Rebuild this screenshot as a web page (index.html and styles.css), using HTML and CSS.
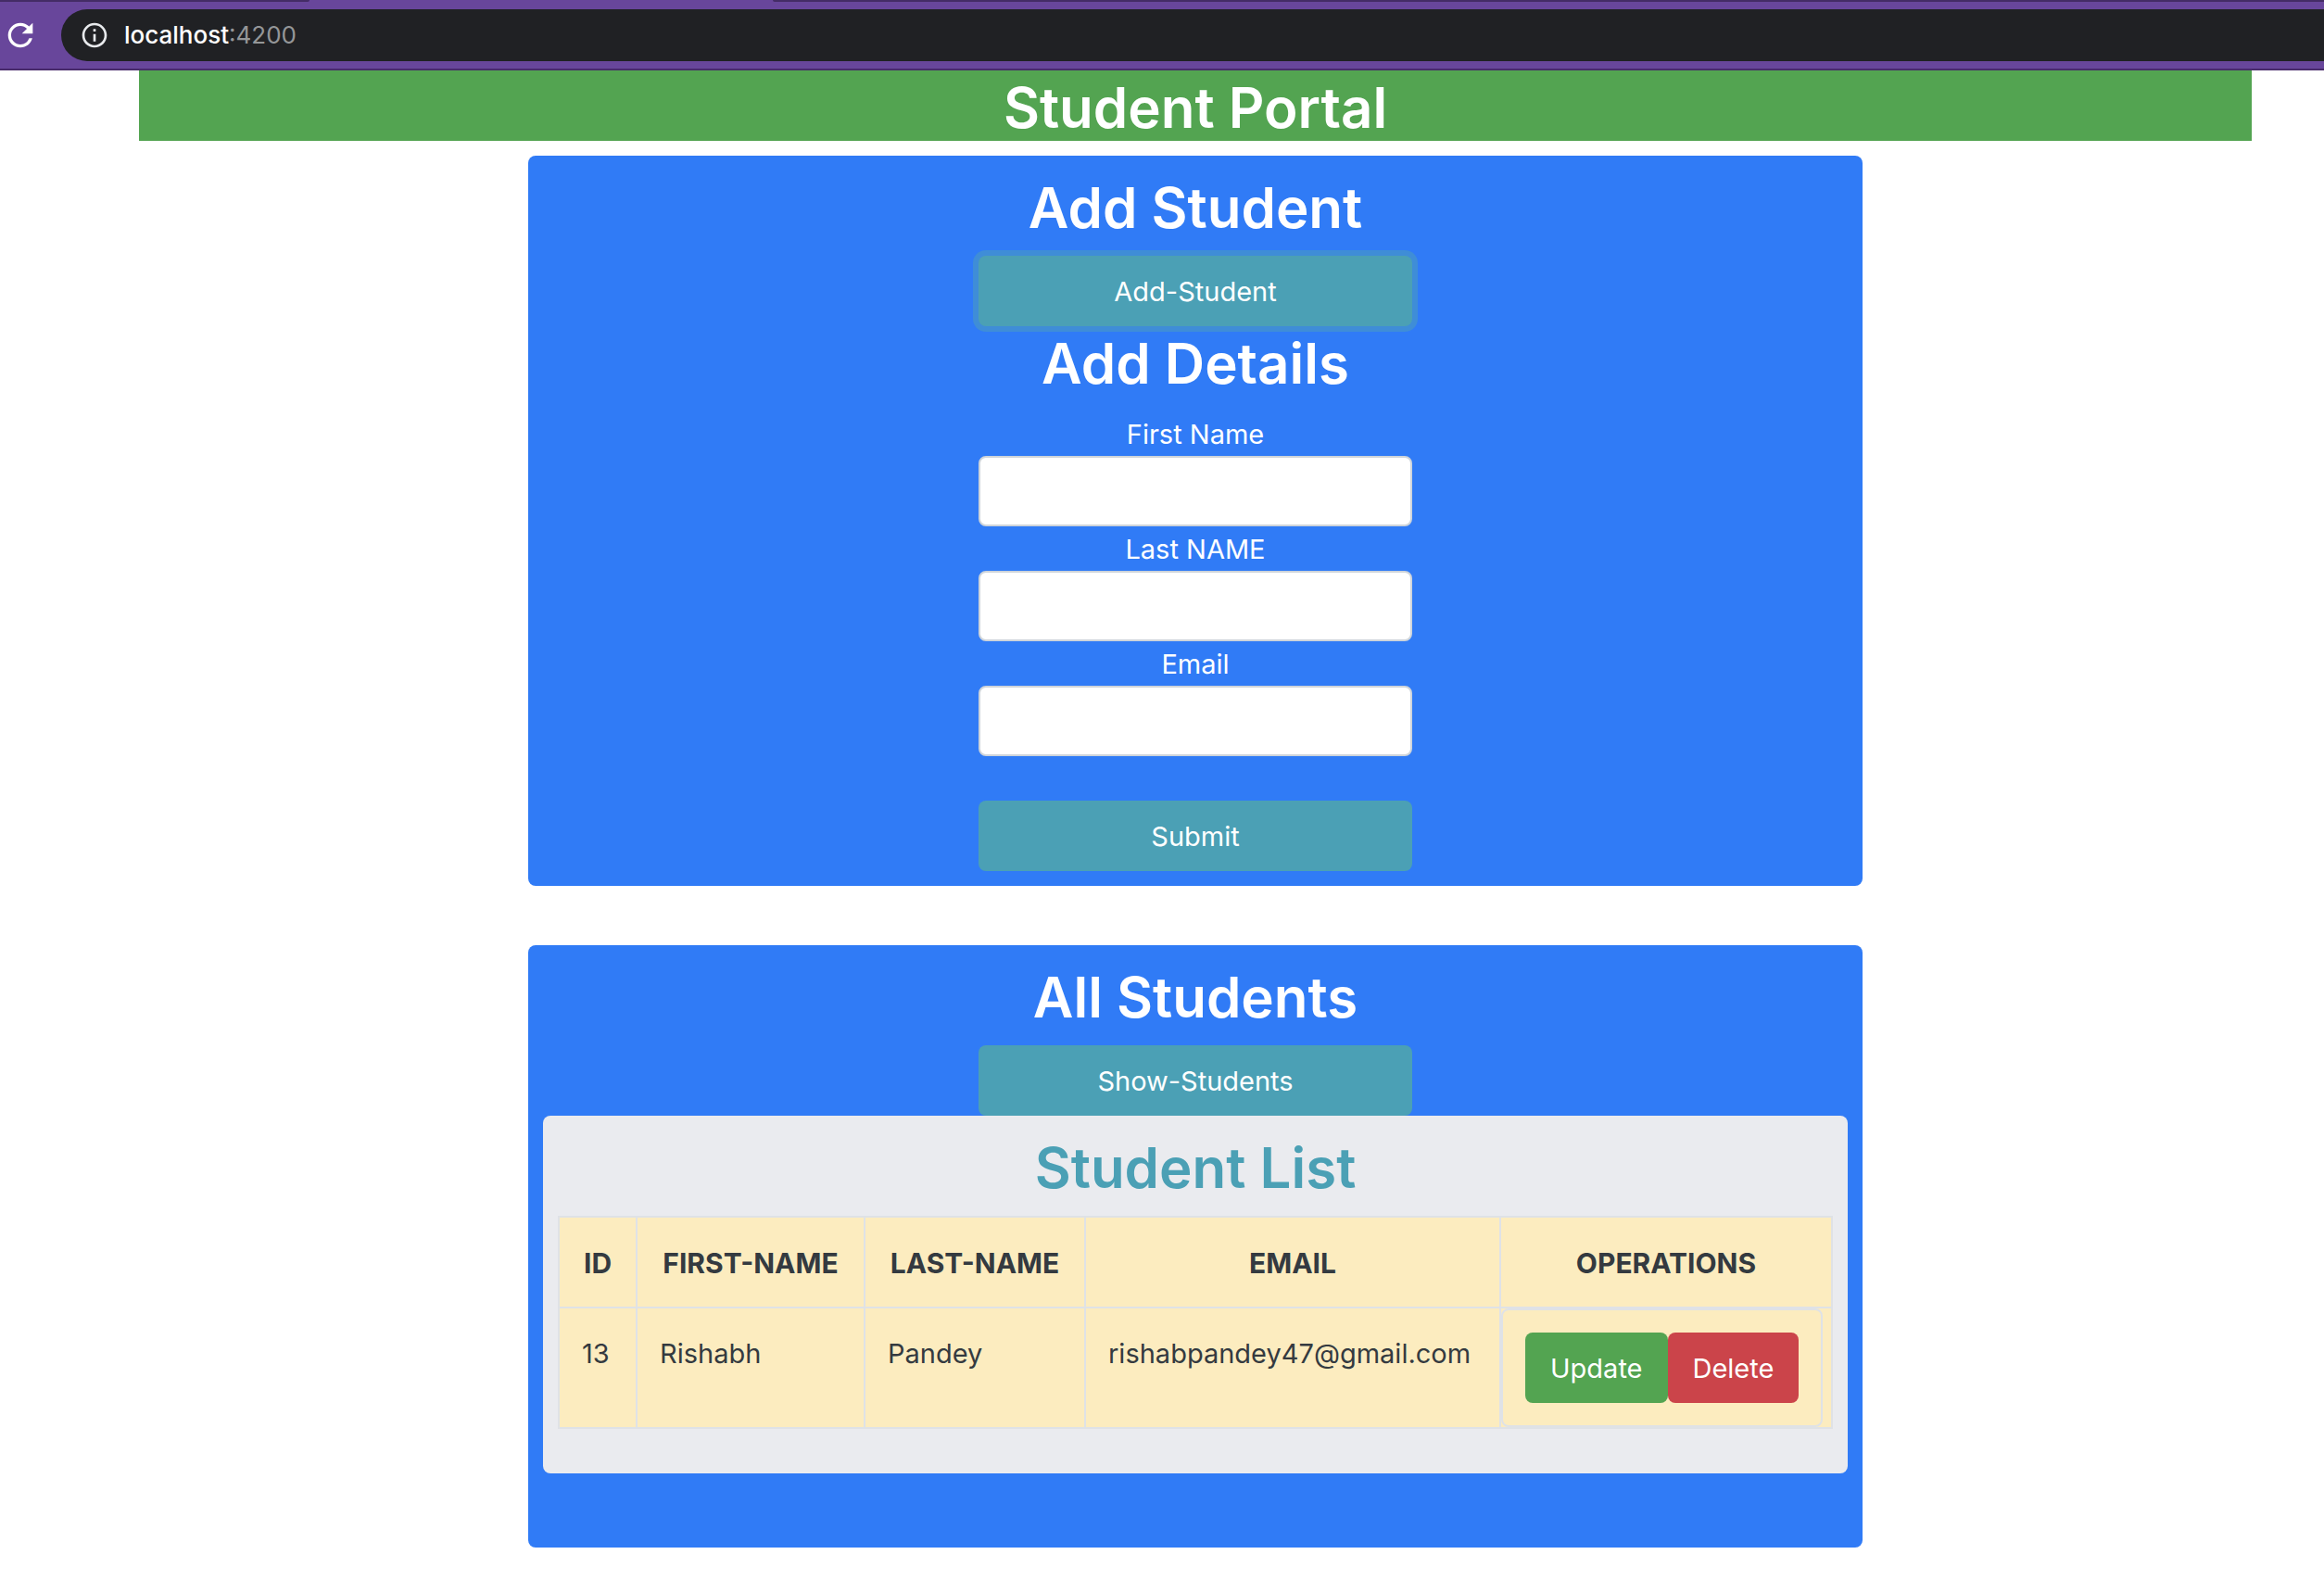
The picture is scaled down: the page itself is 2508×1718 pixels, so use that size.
FILE: index.html
```html
<!DOCTYPE html>
<html lang="en">
<head>
<meta charset="utf-8">
<title>Student Portal</title>
<link rel="stylesheet" href="styles.css">
</head>
<body>
<div class="browser">
  <div class="tabstrip"><span class="tab-left"></span><span class="tab-right"></span></div>
  <div class="toolbar">
    <button class="reload" type="button" aria-label="Reload">
      <svg viewBox="0 0 24 24" width="40" height="40" fill="#fff"><path d="M17.65 6.35A7.96 7.96 0 0 0 12 4c-4.42 0-7.99 3.58-7.99 8s3.57 8 7.99 8c3.73 0 6.84-2.55 7.73-6h-2.08A5.99 5.99 0 0 1 12 18c-3.31 0-6-2.69-6-6s2.69-6 6-6c1.66 0 3.14.69 4.22 1.78L13 11h7V4z"/></svg>
    </button>
    <div class="address">
      <svg viewBox="0 0 24 24" width="32" height="32" fill="#e8eaed"><path d="M11 7h2v2h-2zm0 4h2v6h-2zm1-9C6.48 2 2 6.48 2 12s4.48 10 10 10 10-4.48 10-10S17.52 2 12 2zm0 18c-4.41 0-8-3.59-8-8s3.59-8 8-8 8 3.59 8 8-3.59 8-8 8z"/></svg>
      <span class="url">localhost<span class="port">:4200</span></span>
    </div>
  </div>
</div>

<main class="container">
  <h1 class="title banner">Student Portal</h1>

  <section class="card">
    <h2 class="title">Add Student</h2>
    <button class="btn btn-info btn-wide focused" type="button">Add-Student</button>
    <form class="form">
      <h2 class="title">Add Details</h2>
      <label for="first">First Name</label>
      <input id="first" type="text">
      <label for="last">Last NAME</label>
      <input id="last" type="text">
      <label for="email">Email</label>
      <input id="email" type="text">
      <button class="btn btn-info btn-wide submit" type="button">Submit</button>
    </form>
  </section>

  <section class="card students">
    <h2 class="title">All Students</h2>
    <button class="btn btn-info btn-wide" type="button">Show-Students</button>
    <div class="list">
      <h2 class="title list-title">Student List</h2>
      <table class="table">
        <colgroup>
          <col class="col-id"><col class="col-first"><col class="col-last"><col class="col-email"><col>
        </colgroup>
        <thead>
          <tr><th>ID</th><th>FIRST-NAME</th><th>LAST-NAME</th><th>EMAIL</th><th>OPERATIONS</th></tr>
        </thead>
        <tbody>
          <tr>
            <td>13</td><td>Rishabh</td><td>Pandey</td><td>rishabpandey47@gmail.com</td>
            <td class="operations">
              <div class="actions">
                <button class="btn btn-success" type="button">Update</button>
                <button class="btn btn-danger" type="button">Delete</button>
              </div>
            </td>
          </tr>
        </tbody>
      </table>
    </div>
  </section>
</main>
</body>
</html>
```
FILE: styles.css
```css
* { box-sizing: border-box; }

body {
  margin: 0;
  background: #fff;
  color: #343a40;
  font: 400 29px/46px Inter, "Liberation Sans", sans-serif;
}

button, input { font: inherit; }

/* Browser chrome */
.browser {
  background: #68469b;
  border-bottom: 2px solid #482b6b;
  overflow: hidden;
}
.tabstrip {
  display: flex;
  justify-content: space-between;
  height: 2px;
}
.tab-left, .tab-right { background: #442c66; }
.tab-left { width: 334px; border-bottom-right-radius: 6px; }
.tab-right { flex: 1; margin-left: 500px; border-bottom-left-radius: 6px; }
.toolbar {
  display: flex;
  align-items: center;
  gap: 24px;
  padding: 8px 0 8px 2px;
}
.reload {
  display: flex;
  padding: 0;
  border: 0;
  background: none;
}
.address {
  flex: 1;
  display: flex;
  align-items: center;
  gap: 16px;
  height: 56px;
  padding-left: 20px;
  border-radius: 28px 0 0 28px;
  background: #202124;
}
.url { color: #fff; font-size: 26px; font-weight: 500; }
.port { color: #949698; font-weight: 400; }

/* Page */
.container {
  padding: 0 78px 48px 150px;
}
.title {
  margin: 0 0 16px;
  padding-top: 4px;
  font-size: 60px;
  font-weight: 600;
  line-height: 72px;
  text-align: center;
}
.banner { background: #53a451; color: #fff; }

.card {
  display: flex;
  flex-direction: column;
  align-items: center;
  max-width: 1440px;
  margin: 0 auto 64px;
  padding: 16px;
  border-radius: 8px;
  background: #307bf6;
  color: #fff;
}
.students { margin-bottom: 0; padding-bottom: 80px; }

.btn {
  height: 76px;
  padding: 2px 27px 0;
  border: 0;
  border-radius: 8px;
  color: #fff;
}
.btn-wide { width: 468px; }
.btn-info { background: #4ba0b5; }
.btn-success { background: #53a451; }
.btn-danger { background: #cb444a; }
.focused { box-shadow: 0 0 0 6px #3f8dd7; }

.form {
  display: flex;
  flex-direction: column;
  width: 468px;
  text-align: center;
}
.form label { padding-top: 2px; }
.form input {
  height: 76px;
  padding: 0 24px;
  border: 2px solid #ced4da;
  border-radius: 8px;
  background: #fff;
  color: #495057;
}
.submit { margin-top: 48px; }

.list {
  width: 100%;
  padding: 16px 16px 48px;
  border-radius: 8px;
  background: #eaebef;
  color: #343a40;
}
.list-title { color: #4ba0b5; }

.table {
  width: 100%;
  table-layout: fixed;
  border-collapse: collapse;
  background: #fcecbf;
}
.table th, .table td {
  padding: 26px 24px 24px;
  border: 2px solid #dfe2e6;
  vertical-align: top;
}
.table th { padding: 26px 0 24px; font-size: 30px; font-weight: 700; }
.col-id { width: 84px; }
.col-first { width: 246px; }
.col-last { width: 238px; }
.col-email { width: 448px; }
.table .operations { padding: 0; }
.actions {
  display: flex;
  width: fit-content;
  padding: 24px;
  border: 2px solid #dfe2e6;
  border-radius: 8px;
}
```
